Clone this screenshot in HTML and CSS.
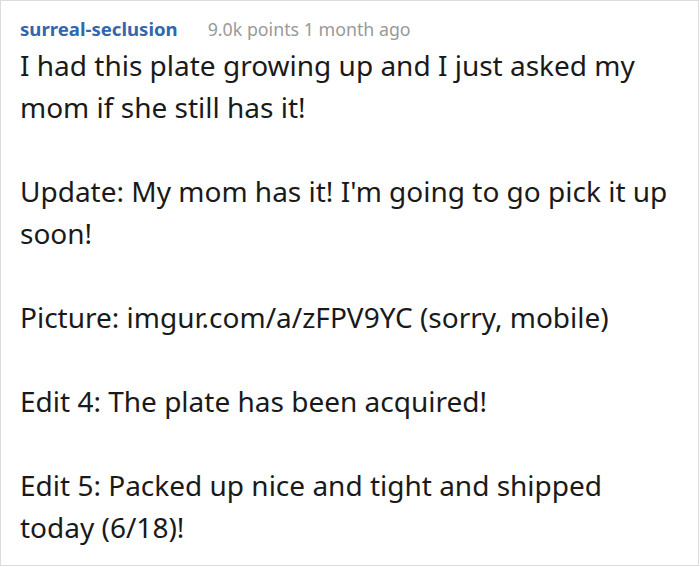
FILE: index.html
```html
<!DOCTYPE html>
<html>
<head>
<meta charset="utf-8">
<link rel="stylesheet" href="styles.css">
</head>
<body>
<div class="comment">
  <div class="header">
    <span class="user">surreal-seclusion</span>
    <span class="meta">9.0k points 1 month ago</span>
  </div>
  <div class="body">
    <p>I had this plate growing up and I just asked my mom if she still has it!</p>
    <p>Update: My mom has it! I'm going to go pick it up soon!</p>
    <p>Picture: imgur.com/a/zFPV9YC (sorry, mobile)</p>
    <p>Edit 4: The plate has been acquired!</p>
    <p>Edit 5: Packed up nice and tight and shipped today (6/18)!</p>
  </div>
</div>
</body>
</html>
```

FILE: styles.css
```css
html, body {
  margin: 0;
  padding: 0;
  background: #fff;
}
.comment {
  box-sizing: border-box;
  width: 699px;
  height: 566px;
  border: 1px solid #dcdcdc;
  padding: 15px 24px 0 19px;
  font-family: "Noto Sans", "Open Sans", sans-serif;
  overflow: hidden;
}
.header {
  display: flex;
  align-items: baseline;
  gap: 30px;
  height: 28px;
}
.user {
  color: #3366ad;
  font-weight: 700;
  font-size: 18.6px;
}
.meta {
  color: #999;
  font-size: 17.8px;
}
.body {
  font-size: 28px;
  line-height: 42px;
  color: #1a1a1a;
}
.body p {
  margin: 0 0 42px 0;
}
```
